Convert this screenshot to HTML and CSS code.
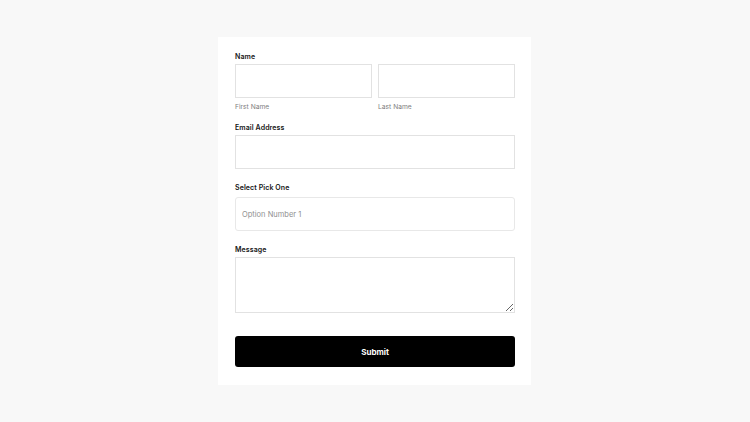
FILE: index.html
```html
<!DOCTYPE html>
<html>
<head>
<meta charset="utf-8">
<link rel="stylesheet" href="styles.css">
</head>
<body>
<form class="card">
  <div class="label">Name</div>
  <div class="name-row">
    <div class="name-col">
      <input class="field" type="text">
      <div class="sublabel">First Name</div>
    </div>
    <div class="name-col">
      <input class="field" type="text">
      <div class="sublabel">Last Name</div>
    </div>
  </div>
  <div class="label label-email">Email Address</div>
  <input class="field" type="text">
  <div class="label label-gap">Select Pick One</div>
  <div class="select">Option Number 1</div>
  <div class="label label-gap">Message</div>
  <textarea class="area"></textarea>
  <button class="submit" type="button">Submit</button>
</form>
</body>
</html>
```
FILE: styles.css
```css
html, body {
  margin: 0;
  padding: 0;
  background: #f8f8f8;
  font-family: Inter, "Liberation Sans", sans-serif;
}
.card {
  box-sizing: border-box;
  width: 313px;
  margin: 37px 0 0 218px;
  background: #ffffff;
  padding: 15px 16px 18px 17px;
  display: flex;
  flex-direction: column;
}
.label {
  font-size: 7px;
  font-weight: 600;
  color: #151515;
  line-height: 9px;
  height: 9px;
  margin-bottom: 3px;
  letter-spacing: 0.1px;
}
.label-email { margin-top: 11px; }
.label-gap { margin-top: 14px; }
.name-row {
  display: flex;
  gap: 6px;
}
.name-col {
  flex: 1;
  display: flex;
  flex-direction: column;
}
.field {
  box-sizing: border-box;
  width: 100%;
  height: 34px;
  margin: 0;
  border: 1px solid #e2e2e2;
  background: #fff;
  outline: none;
  display: block;
}
.sublabel {
  font-size: 6.7px;
  color: #808080;
  line-height: 9px;
  margin-top: 5px;
}
.select {
  box-sizing: border-box;
  height: 34px;
  margin-top: 2px;
  border: 1px solid #e8e8e8;
  border-radius: 3px;
  padding-left: 6px;
  display: flex;
  align-items: center;
  font-size: 7.5px;
  color: #909090;
}
.area {
  box-sizing: border-box;
  width: 100%;
  height: 56px;
  margin: 0;
  border: 1px solid #e2e2e2;
  resize: vertical;
  outline: none;
  display: block;
}
.submit {
  margin-top: 23px;
  height: 31px;
  border: none;
  border-radius: 3px;
  background: #000;
  color: #fff;
  font-family: Inter, "Liberation Sans", sans-serif;
  font-size: 8px;
  font-weight: 700;
  cursor: pointer;
}
```
